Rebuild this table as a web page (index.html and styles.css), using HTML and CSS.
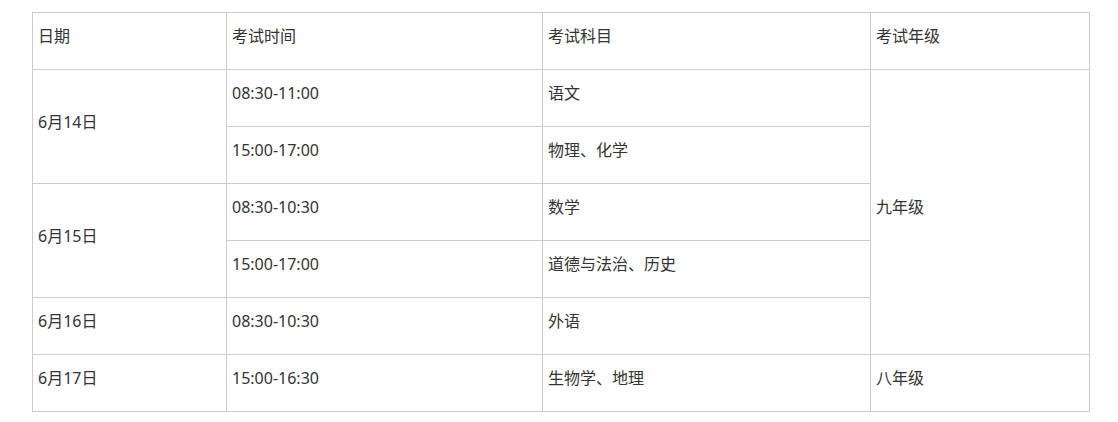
FILE: index.html
```html
<!DOCTYPE html>
<html lang="zh">
<head>
<meta charset="utf-8">
<link rel="stylesheet" href="styles.css">
</head>
<body>
<table class="exam">
  <colgroup>
    <col class="c1"><col class="c2"><col class="c3"><col class="c4">
  </colgroup>
  <tr><td>日期</td><td>考试时间</td><td>考试科目</td><td>考试年级</td></tr>
  <tr><td rowspan="2">6月14日</td><td>08:30-11:00</td><td>语文</td><td rowspan="5">九年级</td></tr>
  <tr><td>15:00-17:00</td><td>物理、化学</td></tr>
  <tr><td rowspan="2">6月15日</td><td>08:30-10:30</td><td>数学</td></tr>
  <tr><td>15:00-17:00</td><td>道德与法治、历史</td></tr>
  <tr><td>6月16日</td><td>08:30-10:30</td><td>外语</td></tr>
  <tr><td>6月17日</td><td>15:00-16:30</td><td>生物学、地理</td><td>八年级</td></tr>
</table>
</body>
</html>
```
FILE: styles.css
```css
html, body { background: #fff; }
body {
  margin: 12px 0 0 32px;
  font-family: "Noto Sans", "Noto Sans CJK SC", sans-serif;
  font-size: 16px;
  color: #333;
}
.exam {
  border-collapse: collapse;
  table-layout: fixed;
  width: 1057px;
}
.c1 { width: 194px; }
.c2 { width: 316px; }
.c3 { width: 328px; }
.c4 { width: 219px; }
.exam td {
  border: 1px solid #ccc;
  padding: 10px 5px 19px;
  line-height: 27px;
  height: 27px;
  vertical-align: middle;
  text-align: left;
}
```
